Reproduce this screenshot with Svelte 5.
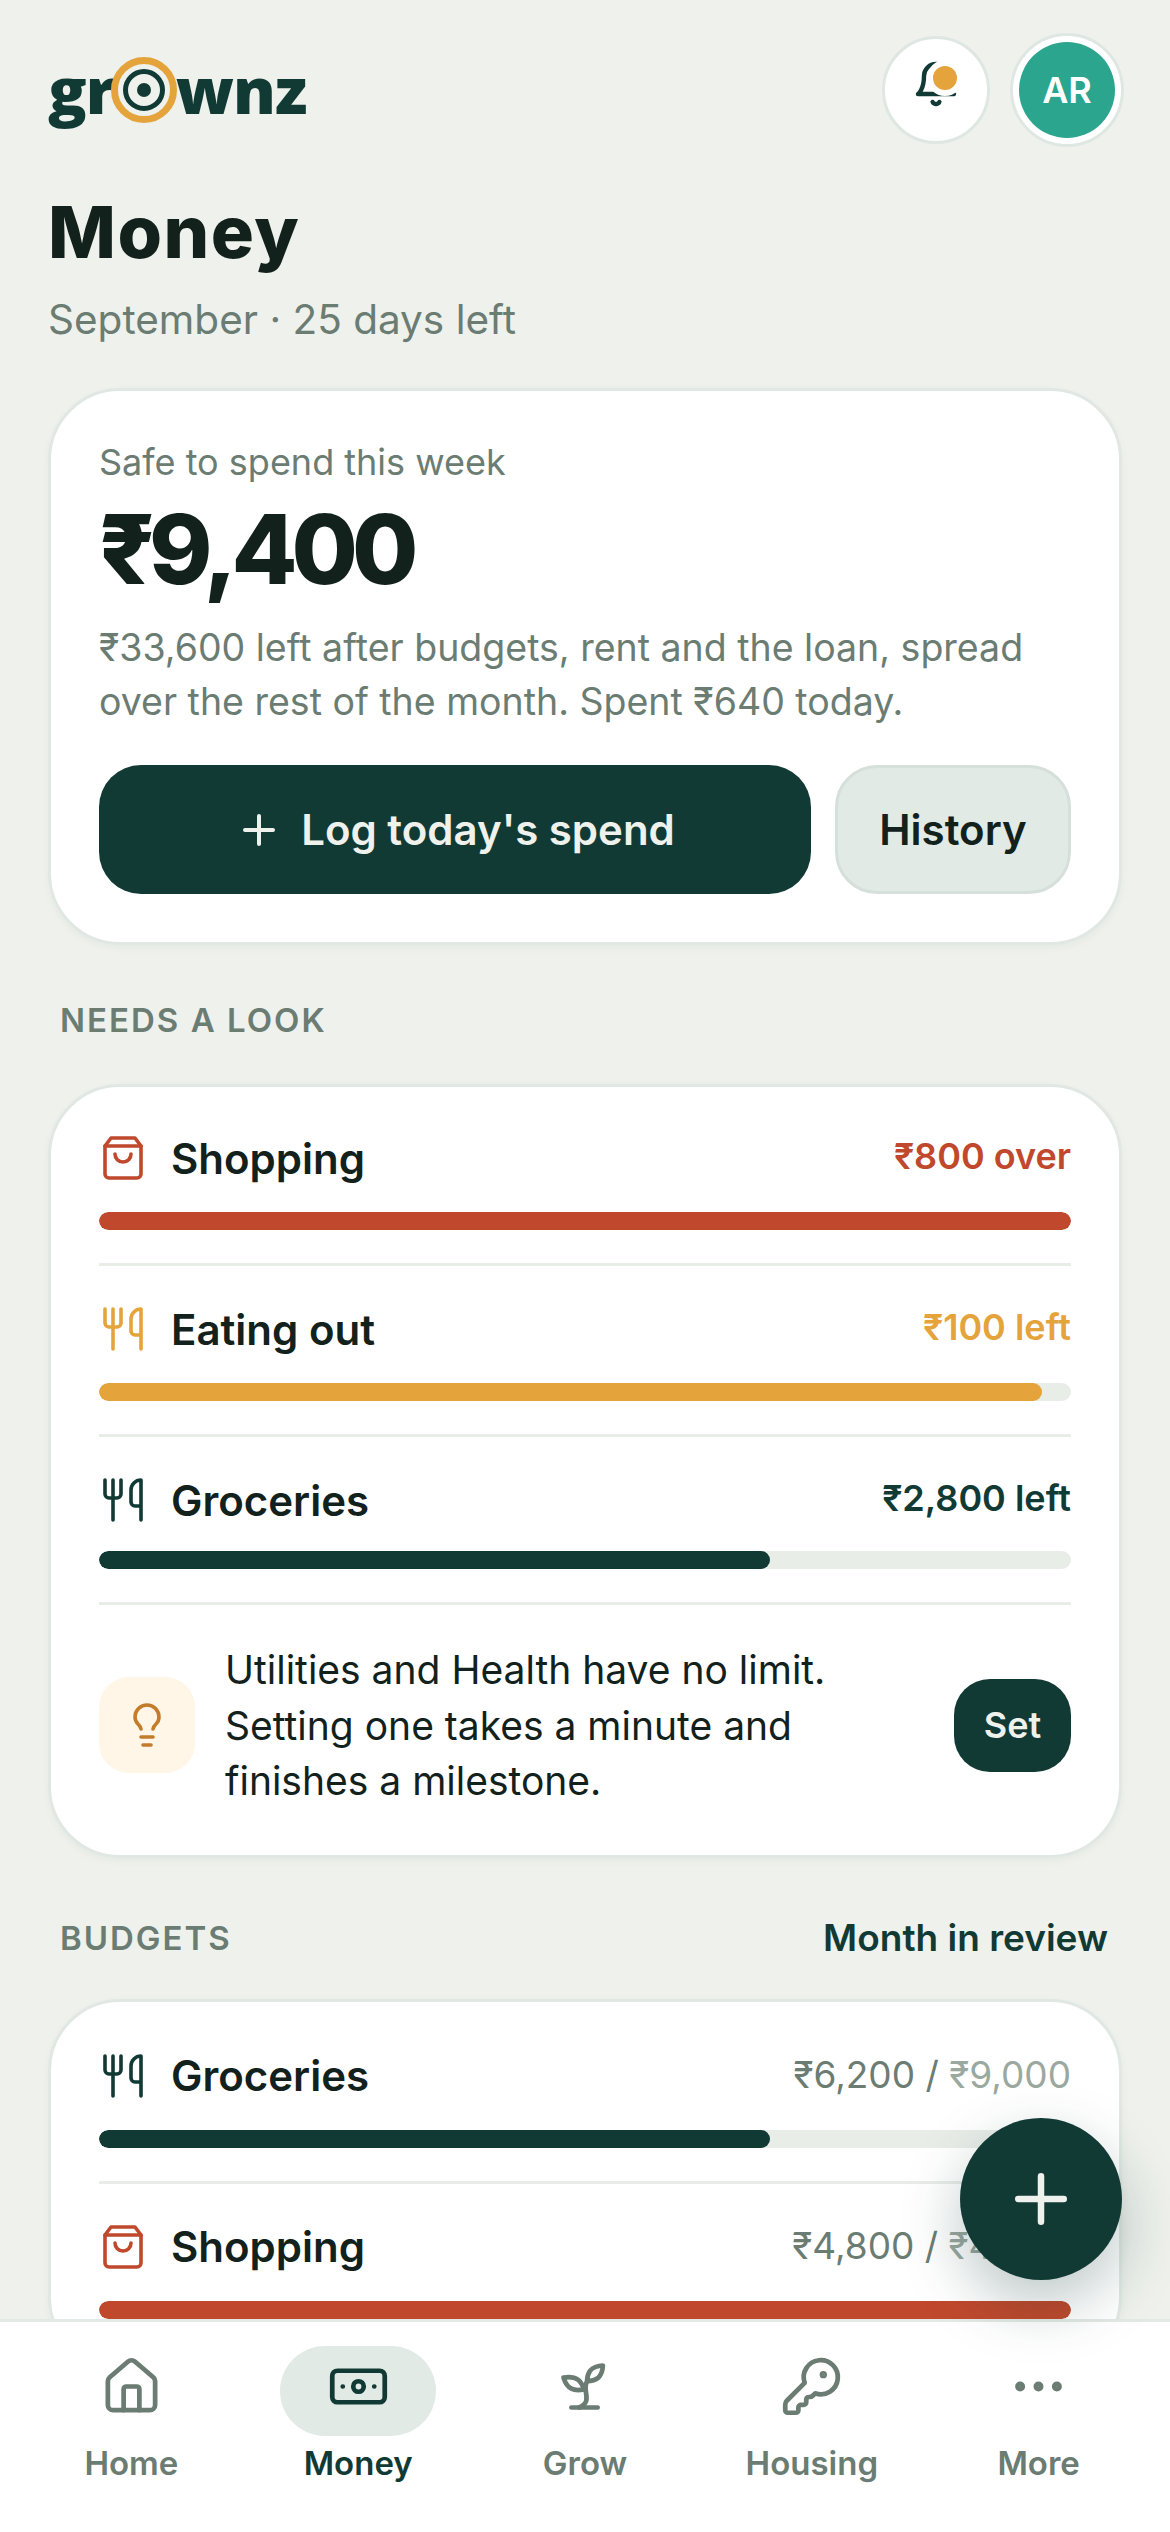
<script>
  const looks = [
    { name: "Shopping", icon: "bag", tone: "red", value: "₹800 over", pct: 100 },
    { name: "Eating out", icon: "food", tone: "amber", value: "₹100 left", pct: 97 },
    { name: "Groceries", icon: "food", tone: "green", value: "₹2,800 left", pct: 69 },
  ];

  const budgets = [
    { name: "Groceries", icon: "food", tone: "green", spent: "₹6,200", limit: "₹9,000", pct: 69 },
    { name: "Shopping", icon: "bag", tone: "red", spent: "₹4,800", limit: "₹4,000", pct: 100 },
  ];

  const tabs = [
    { label: "Home", icon: "home" },
    { label: "Money", icon: "money", active: true },
    { label: "Grow", icon: "grow" },
    { label: "Housing", icon: "key" },
    { label: "More", icon: "more" },
  ];
</script>

{#snippet icon(name)}
  <svg viewBox="0 0 24 24" fill="none" stroke="currentColor" stroke-linecap="round" stroke-linejoin="round">
    {#if name === "bag"}
      <path d="M6 2 3 6v14a2 2 0 0 0 2 2h14a2 2 0 0 0 2-2V6l-3-4Z" />
      <path d="M3 6h18" />
      <path d="M16 10a4 4 0 0 1-8 0" />
    {:else if name === "food"}
      <path d="M3 2v7c0 1.1.9 2 2 2h4a2 2 0 0 0 2-2V2" />
      <path d="M7 2v20" />
      <path d="M21 15V2a5 5 0 0 0-5 5v6c0 1.1.9 2 2 2h3Zm0 0v7" />
    {:else if name === "bulb"}
      <path d="M15 14c.2-1 .7-1.7 1.5-2.5 1-.9 1.5-2.2 1.5-3.5A6 6 0 0 0 6 8c0 1 .2 2.2 1.5 3.5.7.7 1.3 1.5 1.5 2.5" />
      <path d="M9 18h6" />
      <path d="M10 22h4" />
    {:else if name === "bell"}
      <path d="M6 8a6 6 0 0 1 12 0c0 7 3 9 3 9H3s3-2 3-9" />
      <path d="M10.3 21a1.94 1.94 0 0 0 3.4 0" />
    {:else if name === "plus"}
      <path d="M5 12h14" />
      <path d="M12 5v14" />
    {:else if name === "home"}
      <path d="M15 21v-8a1 1 0 0 0-1-1h-4a1 1 0 0 0-1 1v8" />
      <path d="M3 10a2 2 0 0 1 .709-1.528l7-5.999a2 2 0 0 1 2.582 0l7 5.999A2 2 0 0 1 21 10v9a2 2 0 0 1-2 2H5a2 2 0 0 1-2-2z" />
    {:else if name === "money"}
      <rect x="2" y="6" width="20" height="12" rx="2" />
      <circle cx="12" cy="12" r="2" />
      <path d="M6 12h.01M18 12h.01" />
    {:else if name === "grow"}
      <path d="M7 20h10" />
      <path d="M10 20c5.5-2.5.8-6.4 3-10" />
      <path d="M9.5 9.4c1.1.8 1.8 2.2 2.3 3.7-2 .4-3.5.4-4.8-.3-1.2-.6-2.3-1.9-3-4.2 2.8-.5 4.4 0 5.5.8z" />
      <path d="M14.1 6a7 7 0 0 0-1.1 4c1.9-.1 3.3-.6 4.3-1.4 1-1 1.6-2.3 1.7-4.6-2.7.1-4 1-4.9 2z" />
    {:else if name === "key"}
      <path d="M2.586 17.414A2 2 0 0 0 2 18.828V21a1 1 0 0 0 1 1h3a1 1 0 0 0 1-1v-1a1 1 0 0 1 1-1h1a1 1 0 0 0 1-1v-1a1 1 0 0 1 1-1h.172a2 2 0 0 0 1.414-.586l.814-.814a6.5 6.5 0 1 0-4-4z" />
      <circle cx="16.5" cy="7.5" r=".5" fill="currentColor" />
    {:else if name === "more"}
      <circle cx="12" cy="12" r="1" />
      <circle cx="19" cy="12" r="1" />
      <circle cx="5" cy="12" r="1" />
    {/if}
  </svg>
{/snippet}

<div class="screen">
  <header class="top">
    <div class="logo">
      <span>gr</span>
      <svg class="logo-o" viewBox="0 0 66 66" fill="none">
        <circle cx="33" cy="33" r="29.5" stroke="#e5a43b" stroke-width="7" />
        <circle cx="33" cy="33" r="18.5" stroke="#123a35" stroke-width="5" />
        <circle cx="33" cy="33" r="7" fill="#123a35" />
      </svg>
      <span>wnz</span>
    </div>
    <div class="top-actions">
      <button class="bell">
        {@render icon("bell")}
        <span class="bell-dot"></span>
      </button>
      <div class="avatar"><span>AR</span></div>
    </div>
  </header>

  <h1>Money</h1>
  <p class="sub">September · 25 days left</p>

  <section class="card hero">
    <p class="hero-label">Safe to spend this week</p>
    <p class="hero-amount">₹9,400</p>
    <p class="hero-note">₹33,600 left after budgets, rent and the loan, spread over the rest of the month. Spent ₹640 today.</p>
    <div class="hero-actions">
      <button class="log">{@render icon("plus")}Log today's spend</button>
      <button class="history">History</button>
    </div>
  </section>

  <div class="section-head first"><h2>NEEDS A LOOK</h2></div>
  <section class="card list">
    {#each looks as item}
      <div class="row">
        <div class="row-head">
          <span class="row-icon {item.tone}">{@render icon(item.icon)}</span>
          <span class="row-name">{item.name}</span>
          <span class="row-value {item.tone}">{item.value}</span>
        </div>
        <div class="track"><div class="fill {item.tone}" style="width: {item.pct}%"></div></div>
      </div>
    {/each}
    <div class="tip">
      <span class="tip-icon">{@render icon("bulb")}</span>
      <p>Utilities and Health have no limit. Setting one takes a minute and finishes a milestone.</p>
      <button class="set">Set</button>
    </div>
  </section>

  <div class="section-head"><h2>BUDGETS</h2><span class="review">Month in review</span></div>
  <section class="card list budgets">
    {#each budgets as item}
      <div class="row">
        <div class="row-head">
          <span class="row-icon {item.tone}">{@render icon(item.icon)}</span>
          <span class="row-name">{item.name}</span>
          <span class="row-amount">{item.spent} / <span class="limit">{item.limit}</span></span>
        </div>
        <div class="track"><div class="fill {item.tone}" style="width: {item.pct}%"></div></div>
      </div>
    {/each}
  </section>

  <button class="fab">{@render icon("plus")}</button>

  <nav class="tabs">
    {#each tabs as tab}
      <div class="tab" class:active={tab.active}>
        <span class="tab-icon">{@render icon(tab.icon)}</span>
        <span class="tab-label">{tab.label}</span>
      </div>
    {/each}
  </nav>
</div>

<style>
  :global(body) {
    background: #eef1ec;
  }

  .screen {
    position: relative;
    height: 2532px;
    overflow: hidden;
    padding: 33px 48px 0;
    box-sizing: border-box;
    background: #eef1ec;
    color: #12211c;
    font-family: Inter, "Noto Sans", sans-serif;
  }

  button {
    font-family: inherit;
    border: none;
    padding: 0;
  }

  p,
  h1,
  h2 {
    margin: 0;
  }

  .top {
    display: flex;
    justify-content: space-between;
    align-items: center;
    height: 114px;
  }

  .logo {
    display: flex;
    align-items: center;
    font-family: "Open Sans", sans-serif;
    font-weight: 800;
    font-size: 64px;
    line-height: 66px;
    letter-spacing: -1px;
    color: #123a35;
  }

  .logo-o {
    width: 66px;
    height: 66px;
    margin: 0 -1px 0 -4px;
  }

  .top-actions {
    display: flex;
    align-items: center;
    gap: 20px;
    margin-right: -2px;
  }

  .bell {
    position: relative;
    display: flex;
    align-items: center;
    justify-content: center;
    width: 108px;
    height: 108px;
    box-sizing: border-box;
    border: 3px solid #dfe7e2;
    border-radius: 50%;
    background: #fff;
    color: #123a35;
  }

  .bell svg {
    width: 48px;
    height: 48px;
    margin-bottom: 12px;
    stroke-width: 2.2;
  }

  .bell-dot {
    position: absolute;
    top: 21px;
    left: 42px;
    width: 24px;
    height: 24px;
    border: 6px solid #fff;
    border-radius: 50%;
    background: #e5a43b;
  }

  .avatar {
    display: flex;
    align-items: center;
    justify-content: center;
    width: 114px;
    height: 114px;
    box-sizing: border-box;
    border: 3px solid #dfe7e2;
    border-radius: 50%;
    background: #fff;
  }

  .avatar span {
    display: flex;
    align-items: center;
    justify-content: center;
    width: 96px;
    height: 96px;
    border-radius: 50%;
    background: #2ca58f;
    color: #fff;
    font-size: 36px;
    font-weight: 600;
  }

  h1 {
    margin-top: 43px;
    font-size: 72px;
    line-height: 84px;
    font-weight: 800;
    letter-spacing: 1.5px;
  }

  .sub {
    margin-top: 19px;
    font-size: 40.5px;
    line-height: 54px;
    color: #6b7c73;
  }

  .card {
    box-sizing: border-box;
    border: 3px solid #e1e8e3;
    border-radius: 72px;
    background: #fff;
    box-shadow: 0 3px 9px rgb(18 58 53 / 4%);
  }

  .hero {
    margin-top: 41px;
    height: 557px;
    padding: 44px 48px 0;
  }

  .hero-label {
    font-size: 36px;
    line-height: 54px;
    color: #6b7c73;
  }

  .hero-amount {
    margin-top: 6px;
    font-size: 96px;
    line-height: 108px;
    font-weight: 800;
    letter-spacing: -6px;
  }

  .hero-note {
    margin-top: 18px;
    font-size: 37.5px;
    line-height: 54px;
    color: #6b7c73;
  }

  .hero-actions {
    display: flex;
    gap: 24px;
    margin-top: 36px;
  }

  .log {
    flex: 1;
    display: flex;
    align-items: center;
    justify-content: center;
    gap: 18px;
    height: 129px;
    border-radius: 42px;
    background: #123a35;
    color: #eef1ec;
    font-size: 42px;
    font-weight: 600;
  }

  .log svg {
    width: 48px;
    height: 48px;
    stroke-width: 2;
  }

  .history {
    width: 236px;
    height: 129px;
    box-sizing: border-box;
    border: 3px solid #d6e0da;
    border-radius: 42px;
    background: #e1eae5;
    color: #12211c;
    font-size: 42px;
    font-weight: 600;
  }

  .section-head {
    display: flex;
    justify-content: space-between;
    align-items: center;
    height: 42px;
    margin: 59px 14px 40px 12px;
  }

  .section-head.first {
    margin: 54px 14px 43px 12px;
  }

  h2 {
    font-size: 33px;
    font-weight: 600;
    letter-spacing: 2px;
    color: #6b7c73;
  }

  .review {
    font-size: 37px;
    font-weight: 600;
    color: #123a35;
  }

  .list {
    padding: 8px 48px 11px;
  }

  .list.budgets {
    padding-top: 11px;
  }

  .row {
    padding: 39px 0 33px;
    border-bottom: 3px solid #e9ede8;
  }

  .row-head {
    display: flex;
    align-items: center;
    height: 48px;
    margin-bottom: 30px;
  }

  .row:nth-child(3) .row-head {
    margin-bottom: 27px;
  }

  .row-icon {
    display: block;
    width: 48px;
    height: 48px;
    margin-right: 24px;
  }

  .row-icon svg {
    display: block;
    width: 48px;
    height: 48px;
    stroke-width: 1.8;
  }

  .row-name {
    flex: 1;
    font-size: 42px;
    font-weight: 600;
    color: #12211c;
  }

  .row-value {
    padding-bottom: 4px;
    font-size: 36px;
    font-weight: 600;
  }

  .row-amount {
    padding-bottom: 2px;
    font-size: 37px;
    color: #6b7c73;
  }

  .limit {
    color: #9aa8a0;
  }

  .red {
    color: #c0492d;
  }

  .amber {
    color: #e5a43b;
  }

  .green {
    color: #123a35;
  }

  .track {
    height: 18px;
    border-radius: 9px;
    overflow: hidden;
    background: #e9ede8;
  }

  .fill {
    height: 100%;
    border-radius: 9px;
  }

  .fill.red {
    background: #c0492d;
  }

  .fill.amber {
    background: #e5a43b;
  }

  .fill.green {
    background: #123a35;
  }

  .tip {
    display: flex;
    align-items: center;
    gap: 30px;
    padding: 37px 0 35px;
  }

  .tip-icon {
    flex: none;
    display: flex;
    align-items: center;
    justify-content: center;
    width: 96px;
    height: 96px;
    border-radius: 30px;
    background: #fff6e8;
    color: #c27c2b;
  }

  .tip-icon svg {
    width: 48px;
    height: 48px;
    stroke-width: 1.8;
  }

  .tip p {
    flex: 1;
    font-size: 39px;
    line-height: 55.5px;
    color: #12211c;
  }

  .set {
    flex: none;
    width: 117px;
    height: 93px;
    border-radius: 36px;
    background: #123a35;
    color: #eef1ec;
    font-size: 36px;
    font-weight: 600;
  }

  .fab {
    position: absolute;
    z-index: 3;
    right: 48px;
    top: 2118px;
    display: flex;
    align-items: center;
    justify-content: center;
    width: 162px;
    height: 162px;
    border-radius: 50%;
    background: #123a35;
    color: #eef1ec;
    box-shadow: 0 24px 60px rgb(18 58 53 / 28%);
  }

  .fab svg {
    width: 78px;
    height: 78px;
    stroke-width: 2;
  }

  .tabs {
    position: absolute;
    z-index: 2;
    left: 0;
    right: 0;
    bottom: 0;
    display: grid;
    grid-template-columns: repeat(5, 1fr);
    height: 213px;
    box-sizing: border-box;
    padding: 24px 18px 0;
    border-top: 3px solid #e3e9e4;
    background: #fff;
  }

  .tab {
    display: flex;
    flex-direction: column;
    align-items: center;
    color: #6b7c73;
  }

  .tab-icon {
    display: flex;
    align-items: center;
    justify-content: center;
    width: 156px;
    height: 90px;
    box-sizing: border-box;
    padding-bottom: 10px;
    border-radius: 45px;
  }

  .tab-icon svg {
    width: 63px;
    height: 63px;
    stroke-width: 1.8;
  }

  .tab.active {
    color: #123a35;
  }

  .tab.active .tab-icon {
    background: #e1eae5;
  }

  .tab-label {
    margin-top: 6px;
    font-size: 33px;
    line-height: 42px;
    font-weight: 600;
  }
</style>
